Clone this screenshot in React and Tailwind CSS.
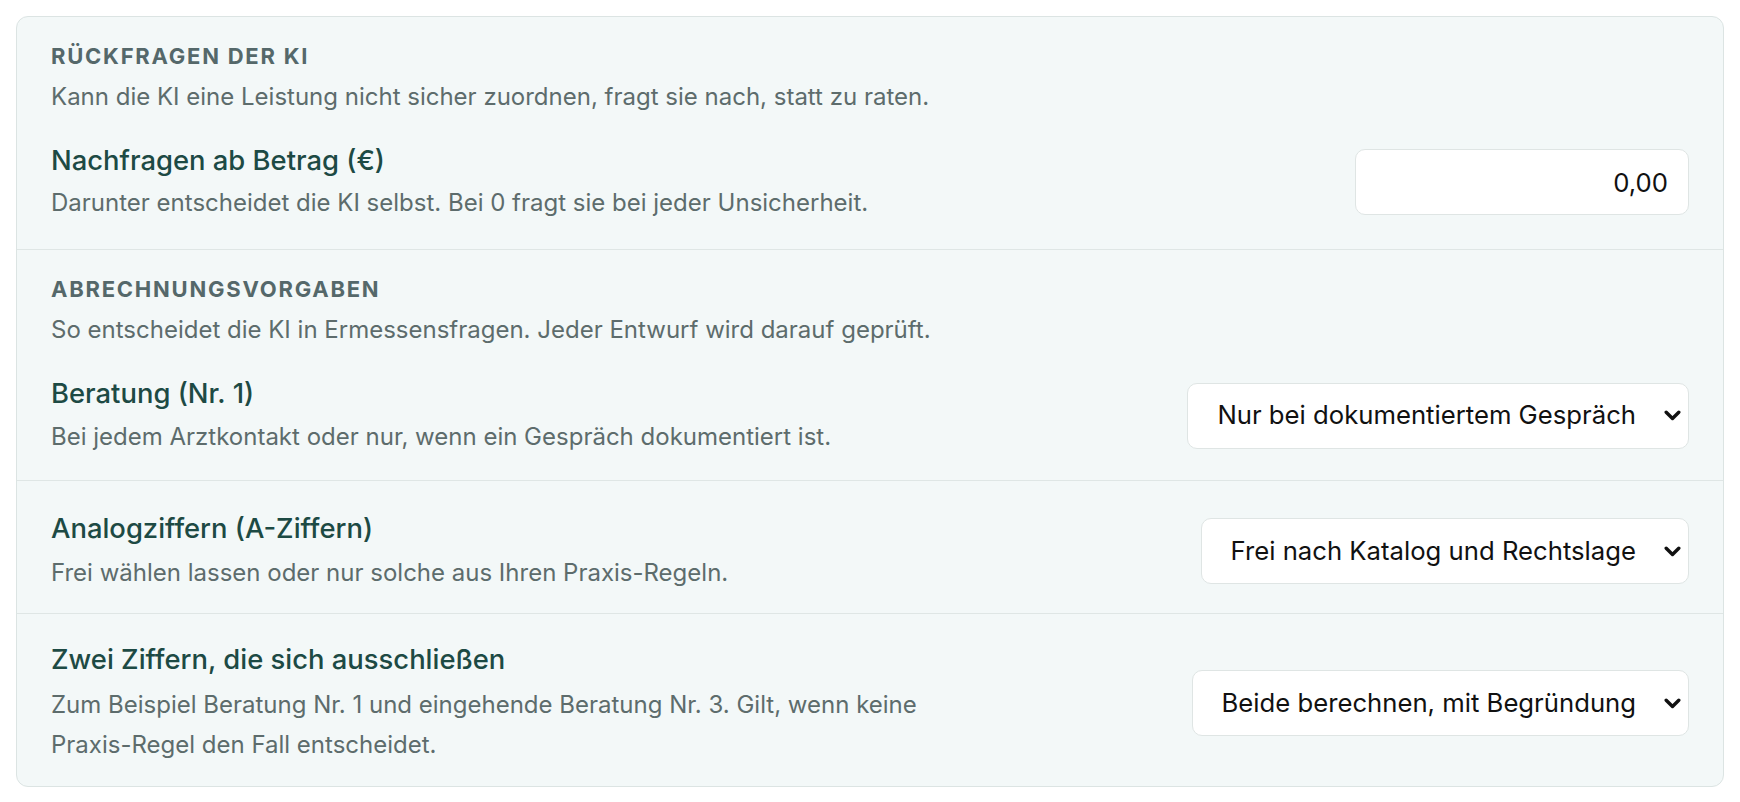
import React from 'react';

const font = { fontFamily: 'Inter, "Noto Sans", sans-serif' };

function Chevron() {
  return (
    <svg width="17" height="11" viewBox="0 0 17 11" className="shrink-0">
      <path d="M2.2 2.2l6.3 6.3l6.3-6.3" fill="none" stroke="#111" strokeWidth="3.4" strokeLinecap="round" strokeLinejoin="round" />
    </svg>
  );
}

function FakeSelect({ value }) {
  return (
    <div className="inline-flex h-[66px] shrink-0 items-center gap-[28px] rounded-[10px] border border-[#dfe5e4] bg-white pl-[29px] pr-[7px] text-[25.7px] text-[#111]">
      <span className="whitespace-nowrap">{value}</span>
      <Chevron />
    </div>
  );
}

function SectionHead({ title, desc }) {
  return (
    <div>
      <h3 className="text-[22px] leading-[27px] font-bold tracking-[0.08em] text-[#55686a] uppercase">{title}</h3>
      <p className="mt-[7px] text-[24px] leading-[39px] text-[#5d6c6c]">{desc}</p>
    </div>
  );
}

function Row({ title, desc, children, className = '', descClass = 'mt-[5px] leading-[39px]' }) {
  return (
    <div className={`flex items-center justify-between gap-8 ${className}`}>
      <div className="max-w-[890px]">
        <div className="text-[27.4px] leading-[36px] font-medium text-[#1d4a44]">{title}</div>
        <p className={`text-[24px] text-[#5d6c6c] ${descClass}`}>{desc}</p>
      </div>
      {children}
    </div>
  );
}

export default function App() {
  return (
    <div className="min-h-screen bg-white p-4" style={font}>
      <div className="rounded-[12px] border border-[#dce4e3] bg-[#f3f8f8]">
        {/* Rückfragen */}
        <section className="border-b border-[#dfe6e5] px-[34px] pt-[26px] pb-[27px]">
          <SectionHead
            title="Rückfragen der KI"
            desc="Kann die KI eine Leistung nicht sicher zuordnen, fragt sie nach, statt zu raten."
          />
          <Row
            className="mt-[26px]"
            title="Nachfragen ab Betrag (€)"
            desc="Darunter entscheidet die KI selbst. Bei 0 fragt sie bei jeder Unsicherheit."
          >
            <input
              readOnly
              value="0,00"
              className="h-[66px] w-[334px] shrink-0 rounded-[10px] border border-[#dfe5e4] bg-white pr-[20px] text-right text-[25.7px] text-[#111] outline-none"
            />
          </Row>
        </section>

        {/* Abrechnungsvorgaben */}
        <section className="border-b border-[#dfe6e5] px-[34px] pt-[26px] pb-[24px]">
          <SectionHead
            title="Abrechnungsvorgaben"
            desc="So entscheidet die KI in Ermessensfragen. Jeder Entwurf wird darauf geprüft."
          />
          <Row
            className="mt-[26px]"
            descClass="mt-[6px] leading-[39px]"
            title="Beratung (Nr. 1)"
            desc="Bei jedem Arztkontakt oder nur, wenn ein Gespräch dokumentiert ist."
          >
            <FakeSelect value="Nur bei dokumentiertem Gespräch" />
          </Row>
        </section>

        <section className="border-b border-[#dfe6e5] px-[34px] pt-[29px] pb-[21px]">
          <Row
            descClass="mt-[7px] leading-[39px]"
            title="Analogziffern (A-Ziffern)"
            desc="Frei wählen lassen oder nur solche aus Ihren Praxis-Regeln."
          >
            <FakeSelect value="Frei nach Katalog und Rechtslage" />
          </Row>
        </section>

        <section className="px-[34px] pt-[27px] pb-[21px]">
          <Row
            descClass="mt-[8px] leading-[40px]"
            title="Zwei Ziffern, die sich ausschließen"
            desc="Zum Beispiel Beratung Nr. 1 und eingehende Beratung Nr. 3. Gilt, wenn keine Praxis-Regel den Fall entscheidet."
          >
            <FakeSelect value="Beide berechnen, mit Begründung" />
          </Row>
        </section>
      </div>
    </div>
  );
}
